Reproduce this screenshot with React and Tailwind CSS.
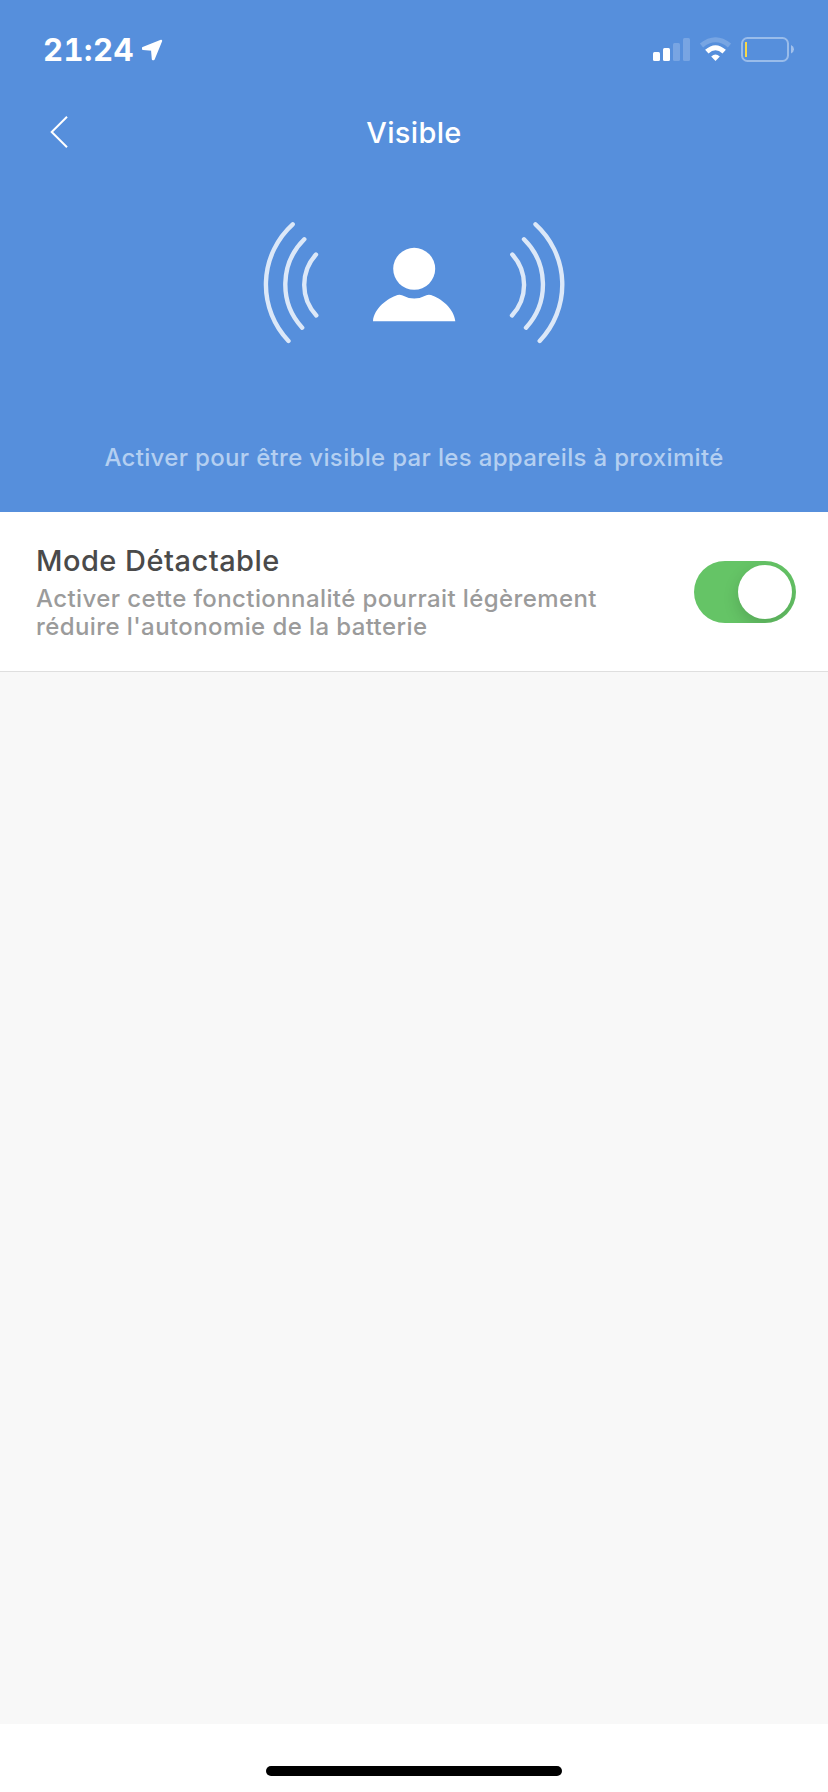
import React from "react";

function StatusBar() {
  return (
    <div className="flex h-[88px] w-full shrink-0 items-start justify-between pl-[43px] pr-[32px] pt-[32px]">
      <div className="flex h-[36px] items-center">
        <span className="w-[91px] whitespace-nowrap text-[31px] font-bold tabular-nums leading-[36px] tracking-[0.5px]">21:24</span>
        <svg className="ml-[6px] h-[24px] w-[24px]" viewBox="140 38 24 24" fill="currentColor">
          <path
            d="M143 48 161.200 40.800 153.700 59.200 152.800 59.200 152 49.800 143 49Z"
            stroke="currentColor"
            strokeWidth="2"
            strokeLinejoin="round"
          />
        </svg>
      </div>
      <svg className="h-[32px] w-[146px]" viewBox="650 32 146 32" fill="currentColor">
        <rect x="653" y="52" width="7" height="9" rx="1.500" />
        <rect x="663" y="48" width="7" height="13" rx="1.500" />
        <g opacity="0.2">
          <rect x="673" y="43" width="7" height="18" rx="1.500" />
          <rect x="683" y="38" width="7" height="23" rx="1.500" />
        </g>
        <path d="M701.500 45.500Q715.500 34 729.500 45.500" fill="none" stroke="currentColor" strokeWidth="5" opacity="0.2" />
        <path d="M706.800 51.700Q715.500 43.800 724.200 51.700" fill="none" stroke="currentColor" strokeWidth="5" />
        <path d="M711.200 56.500Q715.500 52.500 719.800 56.500L715.500 61Z" />
        <rect x="742" y="38" width="46" height="23" rx="5.500" fill="none" stroke="currentColor" strokeWidth="2" opacity="0.4" />
        <path d="M791 45Q794 46.500 794 49.300T791 53.500Z" opacity="0.45" />
        <rect x="745" y="42" width="2" height="15" fill="#f8d84a" />
      </svg>
    </div>
  );
}

function NavBar() {
  return (
    <div className="grid h-[88px] shrink-0 grid-cols-[100px_1fr_100px] items-center">
      <svg className="ml-[46px] h-[36px] w-[24px]" viewBox="46 114 24 36" fill="none">
        <path d="M67 116.800 51.700 132 67 147.200" stroke="currentColor" strokeWidth="2" />
      </svg>
      <h1 className="pt-[2px] text-center text-[29px] font-medium leading-[36px] tracking-[0.35px]">Visible</h1>
    </div>
  );
}

function BroadcastIcon() {
  return (
    <svg className="mt-[39px] h-[136px] w-[318px] shrink-0 self-center" viewBox="255 215 318 136">
      <g fill="none" stroke="#dce8f8" strokeWidth="4.400" strokeLinecap="round">
        <path d="M292.700 224.300A81.500 81.500 0 0 0 288.500 341" />
        <path d="M304.300 239.300A63.500 63.500 0 0 0 302.200 327.700" />
        <path d="M316 254.500A45 45 0 0 0 316.300 315.500" />
        <path d="M535.500 224.300A81.500 81.500 0 0 1 539.700 341" />
        <path d="M524 239.300A63.500 63.500 0 0 1 526 327.700" />
        <path d="M512.300 254.500A45 45 0 0 1 512 315.500" />
      </g>
      <g fill="#fff">
        <circle cx="414.200" cy="268.800" r="21" />
        <path d="M373 321.300C374 308 388 298 397.500 295Q400 294.200 402 295.200Q414.200 301.800 426.400 295.200Q428.500 294.200 431 295C440.500 298 454 308 455.300 321.300Z" />
      </g>
    </svg>
  );
}

function Toggle() {
  return (
    <button
      type="button"
      role="switch"
      aria-checked="true"
      className="flex h-[62px] w-[102px] shrink-0 items-center justify-end overflow-hidden rounded-full bg-[#65c466] p-[4px]"
    >
      <span className="h-[54px] w-[54px] rounded-full bg-white shadow-[0_6px_16px_rgba(0,0,0,0.15)]" />
    </button>
  );
}

export default function App() {
  return (
    <div className="flex h-[1792px] w-[828px] flex-col overflow-hidden bg-white font-['Inter','Liberation_Sans',sans-serif]">
      <header className="flex h-[512px] shrink-0 flex-col bg-[#568fdc] text-white">
        <StatusBar />
        <NavBar />
        <BroadcastIcon />
        <p className="mt-[91px] whitespace-nowrap text-center text-[24px] font-medium leading-[32px] tracking-[0.33px] text-[#b4cff1]">
          Activer pour être visible par les appareils à proximité
        </p>
      </header>
      <section className="flex h-[160px] shrink-0 items-start justify-between border-b border-[#dfdfdf] pl-[36px] pr-[32px]">
        <div className="pt-[31px]">
          <h2 className="whitespace-nowrap text-[29px] font-medium leading-[36px] tracking-[0.48px] text-[#4a4a4a]">Mode Détactable</h2>
          <p className="mt-[6px] whitespace-nowrap text-[24px] font-medium leading-[28px] tracking-[0.4px] text-[#9b9b9b]">
            Activer cette fonctionnalité pourrait légèrement
            <br />
            réduire l'autonomie de la batterie
          </p>
        </div>
        <div className="pt-[49px]">
          <Toggle />
        </div>
      </section>
      <main className="h-[1052px] shrink-0 bg-[#f8f8f8]" />
      <footer className="flex h-[68px] shrink-0 items-start justify-center pt-[42px]">
        <div className="h-[10px] w-[296px] rounded-full bg-black" />
      </footer>
    </div>
  );
}
